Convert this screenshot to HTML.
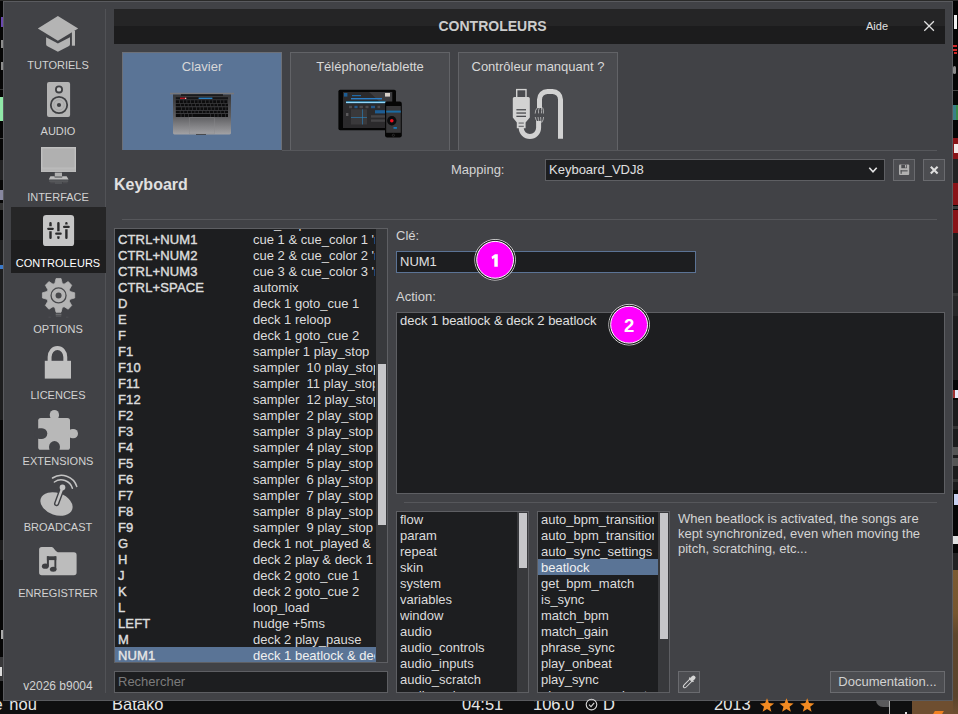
<!DOCTYPE html>
<html>
<head>
<meta charset="utf-8">
<style>
*{box-sizing:border-box;margin:0;padding:0}
html,body{width:958px;height:714px;overflow:hidden;background:#0f0f10;font-family:"Liberation Sans",sans-serif;color:#d6d6d6}
.abs{position:absolute}
#dlg{position:absolute;left:3px;top:1px;width:950px;height:700px;background:#414246;border:1px solid #5a5b5f}
.sl{position:absolute;left:11px;width:94px;height:12px;line-height:12px;text-align:center;font-size:11px;color:#d2d2d2;white-space:nowrap}
#sel{position:absolute;left:11px;top:207px;width:95px;height:66px;background:linear-gradient(#262627 0,#262627 50%,#1e1e1f 50%,#1e1e1f 100%)}
#title{position:absolute;left:114px;top:9px;width:831px;height:35px;background:linear-gradient(#252526 0,#252526 49%,#1c1c1d 49%,#1c1c1d 100%)}
.tab{position:absolute;top:52px;width:160px;height:98px;background:#4a4b4f;border:1px solid #626367;border-bottom:none;font-size:13px;color:#d8d8d8;text-align:center}
.tab span{position:absolute;left:0;right:0;top:6px;line-height:16px}
.hr{position:absolute;height:1px;background:#56575b}
.box{position:absolute;background:#1d1e20;border:1px solid #5e5f63}
.row{position:absolute;left:0;right:0;height:16px;font-size:13px;line-height:16px;white-space:nowrap;color:#dcdcdc}
.k{position:absolute;left:3px;top:1px;font-weight:normal;-webkit-text-stroke:0.42px #dcdcdc;letter-spacing:0.14px}
.a{position:absolute;left:138px;top:1px;width:122px;height:15px;overflow:hidden}
.lbl14{position:absolute;font-size:13px;line-height:16px;color:#d4d4d4;white-space:nowrap}
.li{position:absolute;left:0;right:0;height:16px;line-height:16px;font-size:13px;padding-left:3px;white-space:nowrap;color:#dcdcdc}
.li span{display:block;position:relative;top:1px;width:113px;height:16px;overflow:hidden}
.btn{position:absolute;width:22px;height:22px;background:#4c4d51;border:1px solid #6a6b6f}
.trk{position:absolute;background:#38393c}
.thm{position:absolute;background:#c6c6c9}
.bt{position:absolute;font-size:16.5px;line-height:18px;color:#e6e6e6;white-space:nowrap}
.mk{position:absolute;width:40px;height:40px;border-radius:50%;background:#ff00e6;border:1px solid #fff;box-shadow:0 0 0 1px #222,0 0 0 2px #e8e8e8;color:#fff;font-weight:bold;font-size:18px;line-height:38px;text-align:center}
</style>
</head>
<body>
<!-- background app edges -->
<div class="bt" style="left:-6.4px;top:695px">é</div>
<div class="bt" style="left:9.3px;top:695px">nou</div>
<div class="bt" style="left:112px;top:695px">Batako</div>
<div class="bt" style="left:462px;top:695px">04:51</div>
<div class="bt" style="left:533px;top:695px">106.0</div>
<div class="bt" style="left:603px;top:695px">D</div>
<div class="bt" style="left:714px;top:695px">2013</div>
<div class="abs" style="left:912px;top:700px;width:46px;height:14px;background:#6e4e30"></div>
<div class="abs" style="left:934px;top:711px;width:9px;height:3px;background:#f08020;transform:skewX(-30deg)"></div>
<div class="abs" style="left:905px;top:712px;width:2px;height:2px;background:#ddd"></div>
<div class="abs" style="left:889px;top:700px;width:1px;height:14px;background:#b0b0b0"></div>
<div class="abs" style="left:876px;top:700px;width:13px;height:7px;background:#5a5a5c;border-bottom-left-radius:7px"></div>
<div class="abs" style="left:953px;top:0;width:5px;height:714px;background:#050505"></div>
<div class="abs" style="left:953px;top:233px;width:5px;height:147px;background:#1b1b1c"></div>
<div class="abs" style="left:953px;top:400px;width:5px;height:90px;background:#1b1b1c"></div>
<div class="abs" style="left:953px;top:553px;width:5px;height:18px;background:#222223"></div>
<div class="abs" style="left:953px;top:570px;width:5px;height:144px;background:linear-gradient(#7a5a32 0,#76562f 30%,#5e462c 45%,#5a442c 88%,#6e4e30 100%)"></div>
<div class="abs" style="left:954px;top:15px;width:3px;height:14px;background:#f0f0f0"></div>
<div class="abs" style="left:953px;top:45px;width:4px;height:2px;background:#d02828"></div>
<div class="abs" style="left:953px;top:49px;width:4px;height:2px;background:#d02828"></div>
<div class="abs" style="left:954px;top:52px;width:3px;height:2px;background:#d02828"></div>
<div class="abs" style="left:953px;top:66px;width:3px;height:8px;background:#8a8a8a;border-radius:2px"></div>
<div class="abs" style="left:953px;top:90px;width:5px;height:1px;background:#444"></div>
<div class="abs" style="left:953px;top:105px;width:3px;height:15px;background:#3a8088"></div>
<div class="abs" style="left:955.5px;top:105px;width:2.5px;height:15px;background:#3a8a48"></div>
<div class="abs" style="left:953px;top:138px;width:5px;height:21px;background:#8a1418"></div>
<div class="abs" style="left:954px;top:144px;width:4px;height:9px;background:#f4e8e8"></div>
<div class="abs" style="left:953px;top:159px;width:5px;height:24px;background:#222223"></div>
<div class="abs" style="left:953px;top:183px;width:5px;height:22px;background:#8a1418"></div>
<div class="abs" style="left:953px;top:206px;width:5px;height:3px;background:#3a3a3b"></div>
<div class="abs" style="left:953px;top:210px;width:5px;height:23px;background:#8a1418"></div>
<div class="abs" style="left:953px;top:293px;width:5px;height:3px;background:#333"></div>
<div class="abs" style="left:953px;top:296px;width:5px;height:20px;background:#262627"></div>
<div class="abs" style="left:953px;top:390px;width:2px;height:8px;background:#a03030"></div>
<div class="abs" style="left:955px;top:390px;width:3px;height:8px;background:#e8e8f8"></div>
<div class="abs" style="left:953px;top:426px;width:5px;height:3px;background:#333"></div>
<div class="abs" style="left:953px;top:447px;width:5px;height:8px;background:#555"></div>
<div class="abs" style="left:953px;top:458px;width:5px;height:8px;background:#555"></div>
<div class="abs" style="left:953px;top:479px;width:5px;height:3px;background:#333"></div>
<div class="abs" style="left:954px;top:494px;width:4px;height:11px;background:#c8d0f0"></div>
<div class="abs" style="left:953px;top:536px;width:5px;height:8px;background:#e0e0e0"></div>
<div class="abs" style="left:0;top:0;width:4px;height:700px;background:#060606"></div>
<div class="abs" style="left:1px;top:17px;width:2px;height:10px;background:#6a48b0"></div>
<div class="abs" style="left:1px;top:40px;width:2px;height:8px;background:#8c8c8c"></div>
<div class="abs" style="left:1px;top:62px;width:2px;height:8px;background:#8c8c8c"></div>
<div class="abs" style="left:0px;top:89px;width:4px;height:1px;background:#333"></div>
<div class="abs" style="left:0px;top:97px;width:3px;height:24px;background:#90e8a8"></div>
<div class="abs" style="left:0px;top:138px;width:4px;height:1px;background:#444"></div>
<div class="abs" style="left:0px;top:160px;width:4px;height:20px;background:#222223"></div>
<div class="abs" style="left:0px;top:190px;width:3px;height:10px;background:#8888a0"></div>
<div class="abs" style="left:0px;top:203px;width:4px;height:7px;background:#333"></div>
<div class="abs" style="left:0px;top:240px;width:4px;height:180px;background:#1e1e1f"></div>
<div class="abs" style="left:0px;top:265px;width:3px;height:4px;background:#3a78c8"></div>
<div class="abs" style="left:0px;top:540px;width:4px;height:20px;background:#1c1c1d"></div>
<div class="abs" style="left:1px;top:630px;width:2px;height:9px;background:#aaa"></div>
<div class="abs" style="left:0px;top:657px;width:4px;height:24px;background:#38383a"></div>
<div class="abs" style="left:0px;top:667px;width:2px;height:9px;background:#ddd"></div>

<div class="abs" style="left:0;top:0;width:958px;height:1px;background:#2a2a29"></div>
<div id="dlg"></div>

<!-- sidebar -->
<div class="abs" style="left:105px;top:9px;width:1px;height:684px;background:#515256"></div>
<div id="sel"></div>
<div class="sl" style="top:59px">TUTORIELS</div>
<div class="sl" style="top:125px">AUDIO</div>
<div class="sl" style="top:191px">INTERFACE</div>
<div class="sl" style="top:257px;color:#fff">CONTROLEURS</div>
<div class="sl" style="top:323px">OPTIONS</div>
<div class="sl" style="top:389px">LICENCES</div>
<div class="sl" style="top:455px">EXTENSIONS</div>
<div class="sl" style="top:521px">BROADCAST</div>
<div class="sl" style="top:587px">ENREGISTRER</div>
<div class="sl" style="top:679px;font-size:12px;height:14px;line-height:14px">v2026 b9004</div>

<!-- title -->
<div id="title">
  <div class="abs" style="left:324.5px;top:9px;font-size:14px;line-height:16px;font-weight:bold;color:#cccccc;white-space:nowrap">CONTROLEURS</div>
  <div class="abs" style="left:752px;top:11px;font-size:11px;line-height:13px;color:#e0e0e0">Aide</div>
</div>

<!-- tabs -->
<div class="tab" style="left:122px;background:#5a7496;border-color:#6c7078"><span>Clavier</span></div>
<div class="tab" style="left:290px"><span>Téléphone/tablette</span></div>
<div class="tab" style="left:458px"><span>Contrôleur manquant ?</span></div>
<div class="hr" style="left:282px;top:150px;width:655px"></div>

<!-- mapping -->
<div class="lbl14" style="left:451px;top:162px">Mapping:</div>
<div class="box" style="left:545px;top:159px;width:340px;height:22px"><div class="abs" style="left:3px;top:2px;font-size:13px;line-height:16px;color:#e0e0e0">Keyboard_VDJ8</div></div>
<div class="btn" style="left:893px;top:159px"></div>
<div class="btn" style="left:923px;top:159px"></div>

<div class="abs" style="left:114px;top:176px;font-size:16px;line-height:18px;font-weight:bold;color:#e0e0e0">Keyboard</div>
<div class="hr" style="left:122px;top:219px;width:815px"></div>

<!-- key list -->
<div class="box" id="klist" style="left:114px;top:228px;width:274px;height:435px;overflow:hidden">
<div class="abs" id="kin" style="left:0;top:0;width:261px;height:433px;overflow:hidden">
<div class="row" style="top:-14px"><span class="k">C</span><span class="a">cue_stop</span></div>
<div class="row" style="top:2.0px"><span class="k">CTRL+NUM1</span><span class="a">cue 1 &amp; cue_color 1 'r</span></div>
<div class="row" style="top:18.0px"><span class="k">CTRL+NUM2</span><span class="a">cue 2 &amp; cue_color 2 'r</span></div>
<div class="row" style="top:34.0px"><span class="k">CTRL+NUM3</span><span class="a">cue 3 &amp; cue_color 3 'r</span></div>
<div class="row" style="top:50.0px"><span class="k">CTRL+SPACE</span><span class="a">automix</span></div>
<div class="row" style="top:66.0px"><span class="k">D</span><span class="a">deck 1 goto_cue 1</span></div>
<div class="row" style="top:82.0px"><span class="k">E</span><span class="a">deck 1 reloop</span></div>
<div class="row" style="top:98.0px"><span class="k">F</span><span class="a">deck 1 goto_cue 2</span></div>
<div class="row" style="top:114.0px"><span class="k">F1</span><span class="a">sampler 1 play_stop</span></div>
<div class="row" style="top:130.0px"><span class="k">F10</span><span class="a">sampler&nbsp; 10 play_stop</span></div>
<div class="row" style="top:146.0px"><span class="k">F11</span><span class="a">sampler&nbsp; 11 play_stop</span></div>
<div class="row" style="top:162.0px"><span class="k">F12</span><span class="a">sampler&nbsp; 12 play_stop</span></div>
<div class="row" style="top:178.0px"><span class="k">F2</span><span class="a">sampler&nbsp; 2 play_stop</span></div>
<div class="row" style="top:194.0px"><span class="k">F3</span><span class="a">sampler&nbsp; 3 play_stop</span></div>
<div class="row" style="top:210.0px"><span class="k">F4</span><span class="a">sampler&nbsp; 4 play_stop</span></div>
<div class="row" style="top:226.0px"><span class="k">F5</span><span class="a">sampler&nbsp; 5 play_stop</span></div>
<div class="row" style="top:242.0px"><span class="k">F6</span><span class="a">sampler&nbsp; 6 play_stop</span></div>
<div class="row" style="top:258.0px"><span class="k">F7</span><span class="a">sampler&nbsp; 7 play_stop</span></div>
<div class="row" style="top:274.0px"><span class="k">F8</span><span class="a">sampler&nbsp; 8 play_stop</span></div>
<div class="row" style="top:290.0px"><span class="k">F9</span><span class="a">sampler&nbsp; 9 play_stop</span></div>
<div class="row" style="top:306.0px"><span class="k">G</span><span class="a">deck 1 not_played &amp;&nbsp; deck</span></div>
<div class="row" style="top:322.0px"><span class="k">H</span><span class="a">deck 2 play &amp; deck 1 play</span></div>
<div class="row" style="top:338.0px"><span class="k">J</span><span class="a">deck 2 goto_cue 1</span></div>
<div class="row" style="top:354.0px"><span class="k">K</span><span class="a">deck 2 goto_cue 2</span></div>
<div class="row" style="top:370.0px"><span class="k">L</span><span class="a">loop_load</span></div>
<div class="row" style="top:386.0px"><span class="k">LEFT</span><span class="a">nudge +5ms</span></div>
<div class="row" style="top:402.0px"><span class="k">M</span><span class="a">deck 2 play_pause</span></div>
<div class="row" style="top:418.0px;background:#5a7496;color:#f0f0f0"><span class="k">NUM1</span><span class="a">deck 1 beatlock &amp; deck 2</span></div>
</div>
<div class="trk" style="left:261px;top:0;width:11px;height:433px"></div>
<div class="thm" style="left:263px;top:135px;width:8px;height:161px"></div>
</div>
<div class="box" style="left:114px;top:671px;width:274px;height:22px"><div class="abs" style="left:3px;top:2px;font-size:13px;line-height:16px;color:#7b7b7b">Rechercher</div></div>

<!-- right -->
<div class="lbl14" style="left:396px;top:228px">Clé:</div>
<div class="box" style="left:396px;top:251px;width:300px;height:22px;border-color:#5b7395"><div class="abs" style="left:3px;top:2px;font-size:13px;line-height:16px;color:#e0e0e0">NUM1</div></div>
<div class="lbl14" style="left:396px;top:289px">Action:</div>
<div class="box" style="left:396px;top:312px;width:549px;height:182px"><div class="abs" style="left:3px;top:0px;font-size:13px;line-height:16px;color:#e0e0e0">deck 1 beatlock &amp; deck 2 beatlock</div></div>
<div class="hr" style="left:404px;top:502px;width:533px"></div>

<div class="box" id="l1" style="left:396px;top:511px;width:133px;height:182px;overflow:hidden"><div class="abs" style="left:0;top:0;width:120px;height:180px;overflow:hidden">
<div class="li" style="top:-1px"><span>flow</span></div>
<div class="li" style="top:15px"><span>param</span></div>
<div class="li" style="top:31px"><span>repeat</span></div>
<div class="li" style="top:47px"><span>skin</span></div>
<div class="li" style="top:63px"><span>system</span></div>
<div class="li" style="top:79px"><span>variables</span></div>
<div class="li" style="top:95px"><span>window</span></div>
<div class="li" style="top:111px"><span>audio</span></div>
<div class="li" style="top:127px"><span>audio_controls</span></div>
<div class="li" style="top:143px"><span>audio_inputs</span></div>
<div class="li" style="top:159px"><span>audio_scratch</span></div>
<div class="li" style="top:175px"><span>audio_volumes</span></div>
</div>
<div class="trk" style="left:120px;top:0;width:11px;height:180px"></div>
<div class="thm" style="left:122px;top:1px;width:8px;height:55px"></div>
</div>
<div class="box" id="l2" style="left:537px;top:511px;width:133px;height:182px;overflow:hidden"><div class="abs" style="left:0;top:0;width:120px;height:180px;overflow:hidden">
<div class="li" style="top:-1px"><span>auto_bpm_transition</span></div>
<div class="li" style="top:15px"><span>auto_bpm_transition_o</span></div>
<div class="li" style="top:31px"><span>auto_sync_settings</span></div>
<div class="li" style="top:47px;background:#5a7496;color:#f0f0f0"><span>beatlock</span></div>
<div class="li" style="top:63px"><span>get_bpm_match</span></div>
<div class="li" style="top:79px"><span>is_sync</span></div>
<div class="li" style="top:95px"><span>match_bpm</span></div>
<div class="li" style="top:111px"><span>match_gain</span></div>
<div class="li" style="top:127px"><span>phrase_sync</span></div>
<div class="li" style="top:143px"><span>play_onbeat</span></div>
<div class="li" style="top:159px"><span>play_sync</span></div>
<div class="li" style="top:175px"><span>phrase_sync_beat</span></div>
</div>
<div class="trk" style="left:120px;top:0;width:11px;height:180px"></div>
<div class="thm" style="left:122px;top:1px;width:8px;height:126px"></div>
</div>

<div class="abs" style="left:678px;top:511px;width:262px;font-size:13px;line-height:15px;color:#d4d4d4">When beatlock is activated, the songs are kept synchronized, even when moving the pitch, scratching, etc...</div>
<div class="btn" style="left:678px;top:671px"></div>
<div class="btn" style="left:830px;top:671px;width:115px;font-size:13px;color:#d2d2d2;text-align:center;line-height:20px">Documentation...</div>

<svg class="abs" style="left:0;top:0;pointer-events:none" width="958" height="714" viewBox="0 0 958 714">
<defs>
<linearGradient id="lap" x1="0" y1="0" x2="0" y2="1"><stop offset="0" stop-color="#353537"/><stop offset="0.55" stop-color="#5e5e61"/><stop offset="1" stop-color="#a2a2a5"/></linearGradient>
</defs>
<!-- stars + check in bottom strip -->
<g fill="#f28a22">
<path d="M767.0 698.2L768.9 703.1L774.1 703.4L770.0 706.7L771.4 711.8L767.0 708.9L762.6 711.8L764.0 706.7L759.9 703.4L765.1 703.1Z"/>
<path d="M786.5 698.2L788.4 703.1L793.6 703.4L789.5 706.7L790.9 711.8L786.5 708.9L782.1 711.8L783.5 706.7L779.4 703.4L784.6 703.1Z"/>
<path d="M807.2 698.2L809.1 703.1L814.3 703.4L810.2 706.7L811.6 711.8L807.2 708.9L802.8 711.8L804.2 706.7L800.1 703.4L805.3 703.1Z"/>
</g>
<circle cx="591.5" cy="704.6" r="5.3" fill="none" stroke="#d8d8d8" stroke-width="1.1"/>
<path d="M589 704.6l2 2 3.2-3.8" fill="none" stroke="#d8d8d8" stroke-width="1.1"/>

<!-- title close X -->
<path d="M924.3 21.2L933.9 30.8M933.9 21.2L924.3 30.8" stroke="#e0e0e0" stroke-width="1.25" fill="none"/>

<!-- TUTORIELS hat -->
<g fill="#b4b4b4">
<path d="M57.9 16L78.2 28.4L57.9 40.8L37.8 28.4Z"/>
<path d="M46.1 37.2L57.9 43.6L70 37.2V44.2Q70 45.6 68.6 46.3L57.9 51.8L47.5 46.3Q46.1 45.6 46.1 44.2Z"/>
<rect x="71.9" y="31" width="3.1" height="14.7"/>
</g>

<!-- AUDIO speaker -->
<rect x="47" y="82.1" width="23.1" height="34.9" rx="2" fill="#b4b4b4"/>
<circle cx="59" cy="89.4" r="3.1" fill="#c6c6c6" stroke="#3e3f42" stroke-width="1.8"/>
<circle cx="59" cy="105" r="8.2" fill="none" stroke="#3e3f42" stroke-width="1.8"/>
<circle cx="59" cy="105" r="5.2" fill="none" stroke="#a6a6a6" stroke-width="1"/>
<circle cx="59" cy="105" r="2.1" fill="#3e3f42"/>

<!-- INTERFACE monitor -->
<rect x="41" y="147" width="35" height="25" fill="#c0c0c0"/>
<rect x="42.4" y="148.4" width="32.2" height="19.2" fill="#b0b0b0"/>
<rect x="41.6" y="168.4" width="33.8" height="3.2" fill="#b6b6b6"/>
<rect x="54.8" y="172.6" width="7.2" height="4" fill="#b0b0b0"/>
<path d="M50.4 176.2H54.6V177.6H62.2V176.2H66.6L68.6 179.4H48.8Z" fill="#bcbcbc"/>
<rect x="49.2" y="180.4" width="19" height="1.4" fill="#5c5d60"/>
<rect x="50.2" y="182" width="5" height="1.4" fill="#4c4d50"/>
<rect x="55" y="182.2" width="7" height="1.6" fill="#58595c"/>
<rect x="63" y="182" width="4.6" height="1.4" fill="#4c4d50"/>

<!-- CONTROLEURS mixer -->
<rect x="43" y="214.9" width="31.1" height="31.2" rx="3.2" fill="#c6c6c6"/>
<g stroke="#2b2b2c" stroke-width="2.4" fill="none" stroke-linecap="round">
<path d="M50.5 223.2V237.7M58.4 223.2V237.7M66.4 223.2V237.7"/>
</g>
<g stroke="#c6c6c6" stroke-width="4.9" fill="none">
<path d="M48.5 228.8H52.5M56.4 233.7H60.4M64.4 226.9H68.4"/>
</g>
<g stroke="#2b2b2c" stroke-width="2.2" fill="none" stroke-linecap="round">
<path d="M48.2 228.8H52.8M56.2 233.7H60.7M64.1 226.9H68.7"/>
</g>

<!-- OPTIONS gear -->
<g transform="translate(58.55 295.4)">
<path id="gear" transform="scale(0.955 1)" fill="#b4b4b4" stroke="#b4b4b4" stroke-width="0.8" stroke-linejoin="round" d="M-3.90 -12.00L-2.60 -16.90L2.60 -16.90L3.90 -12.00A12.2 12.2 0 0 1 5.73 -11.24L10.11 -13.79L13.79 -10.11L11.24 -5.73A12.2 12.2 0 0 1 12.00 -3.90L16.90 -2.60L16.90 2.60L12.00 3.90A12.2 12.2 0 0 1 11.24 5.73L13.79 10.11L10.11 13.79L5.73 11.24A12.2 12.2 0 0 1 3.90 12.00L2.60 16.90L-2.60 16.90L-3.90 12.00A12.2 12.2 0 0 1 -5.73 11.24L-10.11 13.79L-13.79 10.11L-11.24 5.73A12.2 12.2 0 0 1 -12.00 3.90L-16.90 2.60L-16.90 -2.60L-12.00 -3.90A12.2 12.2 0 0 1 -11.24 -5.73L-13.79 -10.11L-10.11 -13.79L-5.73 -11.24A12.2 12.2 0 0 1 -3.90 -12.00Z"/>
<circle r="7.5" fill="none" stroke="#48494c" stroke-width="1.3"/>
<circle r="3" fill="#48494c"/>
</g>
<rect x="55.7" y="313.7" width="5.7" height="1.6" fill="#6c6d70"/>
<rect x="55.9" y="315.3" width="5.3" height="1.6" fill="#56575a"/>
<rect x="48.5" y="316.6" width="2.4" height="1.2" fill="#4b4c50"/>
<rect x="66" y="316.6" width="2.4" height="1.2" fill="#4b4c50"/>

<!-- LICENCES lock -->
<rect x="44.8" y="360.8" width="26.2" height="17.8" fill="#c0c0c0"/>
<path d="M49.6 361.5V357A7.85 9 0 0 1 65.3 357V361.5" fill="none" stroke="#c0c0c0" stroke-width="3.9"/>

<!-- EXTENSIONS puzzle -->
<g fill="#b8b8b8">
<rect x="38.2" y="418" width="31.8" height="31.8" rx="2.6"/>
<rect x="49.8" y="410" width="9.2" height="10" rx="4.6"/>
<rect x="68" y="429" width="10" height="9.3" rx="4.65"/>
</g>
<g fill="#414246">
<rect x="34" y="428.3" width="13.3" height="10.6" rx="5.3"/>
<rect x="49.1" y="441.1" width="10.8" height="12" rx="5.4"/>
</g>

<!-- BROADCAST -->
<ellipse cx="56.5" cy="504" rx="16.6" ry="11" transform="rotate(19 56.5 504)" fill="#bcbcbc"/>
<path d="M56.6 503.6L62.4 488" stroke="#414246" stroke-width="5.2" stroke-linecap="round" fill="none"/>
<circle cx="62.5" cy="487.4" r="4" fill="#414246"/>
<path d="M56.6 503.6L62.4 488" stroke="#c4c4c4" stroke-width="2.4" stroke-linecap="round" fill="none"/>
<circle cx="62.5" cy="487.4" r="2.8" fill="#c4c4c4"/>
<g fill="none" stroke="#c4c4c4" stroke-width="1.5" stroke-linecap="round">
<path d="M52.5 478A16.2 16.2 0 0 1 76.8 486.4"/>
<path d="M54.4 482A11.8 11.8 0 0 1 72.4 488.3"/>
</g>

<!-- ENREGISTRER folder -->
<path d="M39.1 549.6a2.7 2.7 0 0 1 2.7-2.7H51.5c2.6 0 3.8 5.4 7.6 5.4H73.9a2.7 2.7 0 0 1 2.7 2.7V572.5a2.7 2.7 0 0 1-2.7 2.7H41.8a2.7 2.7 0 0 1-2.7-2.7Z" fill="#bcbcbc"/>
<g fill="#3e3f42">
<ellipse cx="45.3" cy="566.2" rx="3.4" ry="2.6"/>
<ellipse cx="53.2" cy="569.3" rx="3.3" ry="2.5"/>
<rect x="46.9" y="556.3" width="2" height="10.2"/>
<rect x="54.4" y="556.3" width="1.9" height="13.2"/>
<rect x="46.9" y="556.3" width="9.4" height="3.8"/>
</g>

<!-- select chevron -->
<path d="M869.3 167.8L873 171.8L876.7 167.8" stroke="#e4e4e4" stroke-width="1.6" fill="none"/>
<!-- save icon -->
<path d="M899 165.6a1 1 0 0 1 1-1H908.2a1 1 0 0 1 1 1V174a1 1 0 0 1-1 1H900a1 1 0 0 1-1-1Z" fill="#b0b0b0"/>
<rect x="901.3" y="164.6" width="5.6" height="3.6" fill="#4c4d51"/>
<rect x="905" y="165" width="1.2" height="2.6" fill="#b0b0b0"/>
<rect x="900.6" y="170.3" width="7" height="1.1" fill="#4c4d51"/>
<rect x="900.6" y="170.3" width="1.1" height="3.5" fill="#4c4d51"/>
<!-- delete X -->
<path d="M930.8 166.8L937.6 173.6M937.6 166.8L930.8 173.6" stroke="#dedede" stroke-width="2.1" fill="none"/>
<!-- eyedropper -->
<g transform="translate(689.1 682) rotate(45)">
<rect x="-2.1" y="-8.2" width="4.2" height="5" rx="2" fill="#d6d6d6"/>
<rect x="-2.9" y="-4" width="5.8" height="1.5" fill="#d6d6d6"/>
<path d="M-1.5 -2.5V5.2Q-1.5 7.6 0 7.6Q1.5 7.6 1.5 5.2V-2.5Z" fill="none" stroke="#d6d6d6" stroke-width="1"/>
</g>

<!-- laptop -->
<rect x="170" y="92.8" width="64" height="1.6" fill="#77777a"/>
<path d="M173 94.4H231V133a1.4 1.4 0 0 1-1.4 1.4H174.4a1.4 1.4 0 0 1-1.4-1.4Z" fill="url(#lap)"/>
<rect x="181" y="94.4" width="42" height="1.2" fill="#0a0a0a"/>
<rect x="175.8" y="97.2" width="52.2" height="2.2" fill="#151516"/>
<rect x="180" y="97.6" width="6.4" height="1.4" fill="#b01420"/>
<rect x="185" y="97.8" width="1.2" height="1.1" fill="#e8d0d0"/>
<rect x="198.6" y="97.6" width="13.8" height="1.4" fill="#2a7fc0"/>
<g fill="#0c0c0d">
<rect x="175.8" y="100.2" width="52.2" height="3"/>
<rect x="175.8" y="103.8" width="52.2" height="2.6"/>
<rect x="175.8" y="107.2" width="52.2" height="2.8"/>
<rect x="175.8" y="110.6" width="52.2" height="2.8"/>
<rect x="175.8" y="114" width="52.2" height="3"/>
</g>
<g fill="#47474a"><rect x="179.25" y="100.2" width="0.55" height="3.0"/><rect x="182.95" y="100.2" width="0.55" height="3.0"/><rect x="186.65" y="100.2" width="0.55" height="3.0"/><rect x="190.35" y="100.2" width="0.55" height="3.0"/><rect x="194.05" y="100.2" width="0.55" height="3.0"/><rect x="197.75" y="100.2" width="0.55" height="3.0"/><rect x="201.45" y="100.2" width="0.55" height="3.0"/><rect x="205.15" y="100.2" width="0.55" height="3.0"/><rect x="208.85" y="100.2" width="0.55" height="3.0"/><rect x="212.55" y="100.2" width="0.55" height="3.0"/><rect x="216.25" y="100.2" width="0.55" height="3.0"/><rect x="219.95" y="100.2" width="0.55" height="3.0"/><rect x="223.65" y="100.2" width="0.55" height="3.0"/><rect x="227.35" y="100.2" width="0.55" height="3.0"/><rect x="180.45" y="103.8" width="0.55" height="2.6"/><rect x="184.15" y="103.8" width="0.55" height="2.6"/><rect x="187.85" y="103.8" width="0.55" height="2.6"/><rect x="191.55" y="103.8" width="0.55" height="2.6"/><rect x="195.25" y="103.8" width="0.55" height="2.6"/><rect x="198.95" y="103.8" width="0.55" height="2.6"/><rect x="202.65" y="103.8" width="0.55" height="2.6"/><rect x="206.35" y="103.8" width="0.55" height="2.6"/><rect x="210.05" y="103.8" width="0.55" height="2.6"/><rect x="213.75" y="103.8" width="0.55" height="2.6"/><rect x="217.45" y="103.8" width="0.55" height="2.6"/><rect x="221.15" y="103.8" width="0.55" height="2.6"/><rect x="224.85" y="103.8" width="0.55" height="2.6"/><rect x="181.25" y="107.2" width="0.55" height="2.8"/><rect x="184.95" y="107.2" width="0.55" height="2.8"/><rect x="188.65" y="107.2" width="0.55" height="2.8"/><rect x="192.35" y="107.2" width="0.55" height="2.8"/><rect x="196.05" y="107.2" width="0.55" height="2.8"/><rect x="199.75" y="107.2" width="0.55" height="2.8"/><rect x="203.45" y="107.2" width="0.55" height="2.8"/><rect x="207.15" y="107.2" width="0.55" height="2.8"/><rect x="210.85" y="107.2" width="0.55" height="2.8"/><rect x="214.55" y="107.2" width="0.55" height="2.8"/><rect x="218.25" y="107.2" width="0.55" height="2.8"/><rect x="221.95" y="107.2" width="0.55" height="2.8"/><rect x="225.65" y="107.2" width="0.55" height="2.8"/><rect x="179.85" y="110.6" width="0.55" height="2.8"/><rect x="183.55" y="110.6" width="0.55" height="2.8"/><rect x="187.25" y="110.6" width="0.55" height="2.8"/><rect x="190.95" y="110.6" width="0.55" height="2.8"/><rect x="194.65" y="110.6" width="0.55" height="2.8"/><rect x="198.35" y="110.6" width="0.55" height="2.8"/><rect x="202.05" y="110.6" width="0.55" height="2.8"/><rect x="205.75" y="110.6" width="0.55" height="2.8"/><rect x="209.45" y="110.6" width="0.55" height="2.8"/><rect x="213.15" y="110.6" width="0.55" height="2.8"/><rect x="216.85" y="110.6" width="0.55" height="2.8"/><rect x="220.55" y="110.6" width="0.55" height="2.8"/><rect x="224.25" y="110.6" width="0.55" height="2.8"/><rect x="180.75" y="114.0" width="0.55" height="3.0"/><rect x="184.45" y="114.0" width="0.55" height="3.0"/><rect x="188.15" y="114.0" width="0.55" height="3.0"/><rect x="191.85" y="114.0" width="0.55" height="3.0"/><rect x="210.35" y="114.0" width="0.55" height="3.0"/><rect x="214.05" y="114.0" width="0.55" height="3.0"/><rect x="217.75" y="114.0" width="0.55" height="3.0"/><rect x="221.45" y="114.0" width="0.55" height="3.0"/><rect x="225.15" y="114.0" width="0.55" height="3.0"/></g>
<rect x="189.7" y="117.8" width="24.8" height="16.2" fill="none" stroke="#8a8a8d" stroke-width="0.5" opacity="0.8"/>
<rect x="196" y="134" width="10" height="0.8" fill="#3a3a3c"/>

<!-- tablet + phone -->
<rect x="338.4" y="89.7" width="57.6" height="40.6" rx="1.8" fill="#050505"/>
<rect x="343" y="92" width="49.2" height="36" fill="#2b2a2c"/>
<path d="M369 92H392.2V104L380 102Z" fill="#3c3c3f"/>
<rect x="344" y="93" width="3.4" height="3.6" fill="#1d5d94"/>
<rect x="352" y="95" width="9" height="1.2" fill="#1f6aa8"/>
<rect x="385" y="93" width="5" height="3.6" fill="#d8d0c8"/>
<rect x="351" y="98" width="31" height="1.4" fill="#2a7ec8"/>
<rect x="346" y="101.4" width="39.5" height="1.8" fill="#35b0ea"/>
<rect x="346" y="102" width="39.5" height="0.6" fill="#d8f0ff"/>
<g fill="#4c4b4e"><rect x="349" y="105.8" width="3" height="2.4"/><rect x="359.5" y="105.8" width="3.4" height="2.4"/><rect x="365.5" y="105.8" width="3" height="2.4"/><rect x="377.5" y="105.8" width="2.6" height="2.4"/></g><rect x="354.4" y="105.8" width="3.2" height="2.4" fill="#24598a"/><rect x="371" y="105.8" width="4" height="2.4" fill="#24598a"/>
<rect x="351" y="109.3" width="16" height="15.2" fill="#3a393b"/>
<rect x="351" y="117.2" width="16" height="0.6" fill="#2a86c4"/>
<rect x="362.2" y="109.3" width="0.6" height="15.2" fill="#2a86c4"/>
<rect x="375" y="110.2" width="10" height="3.2" fill="#1d5d94"/>
<rect x="371" y="115.2" width="14" height="2.4" fill="#454446"/>
<rect x="371" y="119.4" width="14" height="2.4" fill="#454446"/>
<rect x="346" y="113" width="2.4" height="3" fill="#5a595b"/>
<rect x="385" y="101.5" width="16.8" height="36" rx="2.2" fill="#060606"/>
<rect x="386.2" y="106" width="14.6" height="26.8" fill="#38383a"/>
<rect x="386.2" y="110.6" width="14.6" height="2" fill="#1a6ca4"/>
<circle cx="391.8" cy="120.8" r="4.7" fill="#0c0c0d"/>
<circle cx="391.8" cy="120.8" r="1.8" fill="#f01020"/>
<rect x="393.5" y="127" width="3.4" height="1.8" fill="#1a78b8"/>
<circle cx="393.4" cy="135.3" r="1.1" fill="none" stroke="#555" stroke-width="0.4"/>

<!-- cable -->
<g fill="none" stroke="#d2d2d2">
<rect x="516.7" y="89.6" width="9.3" height="9" stroke-width="1.4"/>
<path d="M521.2 127V127.8A8.7 8.7 0 0 0 538.6 127.8V121" stroke-width="5"/>
<path d="M539.5 108V99.4A8 8 0 0 1 547.5 91.4H552.5A8 8 0 0 1 560.5 99.4V138.7" stroke-width="5"/>
</g>
<path d="M512.8 98.6a1.5 1.5 0 0 1 1.5-1.5H528.3a1.5 1.5 0 0 1 1.5 1.5V117.5L525.6 122.6V128.2H516.8V122.6L512.8 117.5Z" fill="#d2d2d2"/>
<g fill="#4a4b4f">
<rect x="516.4" y="109.1" width="9.6" height="1.3"/>
<rect x="516.4" y="112.4" width="9.6" height="1.3"/>
<rect x="516.4" y="115.7" width="9.6" height="1.3"/>
<rect x="518.6" y="122.6" width="5.2" height="0.9"/>
<rect x="518.6" y="125.8" width="5.2" height="0.9"/>
</g>
<g fill="none" stroke="#d2d2d2" stroke-width="0.7">
<path d="M537.6 107.5Q535 110 535.2 113.6M539.4 107.5Q538 110.5 538.6 113.4M541.4 107.5Q542 110.5 541.4 113.4M542.6 107.5Q544 110 543.4 113.6"/>
<path d="M535.2 117Q535.6 120 538 122.5M538 117Q538.2 120 539.5 122.5M540.6 117Q540.8 120 541 122.5M543.6 117Q543.4 120 541.8 122.5"/>
</g>
<!-- markers -->
<g font-family="Liberation Sans, sans-serif" font-weight="bold" font-size="18" text-anchor="middle" fill="#ffffff">
<circle cx="495.1" cy="259.8" r="20.3" fill="none" stroke="#d4d4d4" stroke-width="1"/>
<circle cx="495.1" cy="259.8" r="19.4" fill="none" stroke="#1a1a1a" stroke-width="0.9"/>
<circle cx="495.1" cy="259.8" r="18.4" fill="#ff00ff" stroke="#ffffff" stroke-width="1"/>
<path d="M497.8 254.3H495L491.5 256.7L492.3 259.3L494.3 258V266.8H497.8Z" fill="#ffffff"/>
<circle cx="629.1" cy="324.7" r="20.3" fill="none" stroke="#d4d4d4" stroke-width="1"/>
<circle cx="629.1" cy="324.7" r="19.4" fill="none" stroke="#1a1a1a" stroke-width="0.9"/>
<circle cx="629.1" cy="324.7" r="18.4" fill="#ff00ff" stroke="#ffffff" stroke-width="1"/>
<text x="629.1" y="332.1" font-size="18.5">2</text>
</g>
</svg>
</body>
</html>
